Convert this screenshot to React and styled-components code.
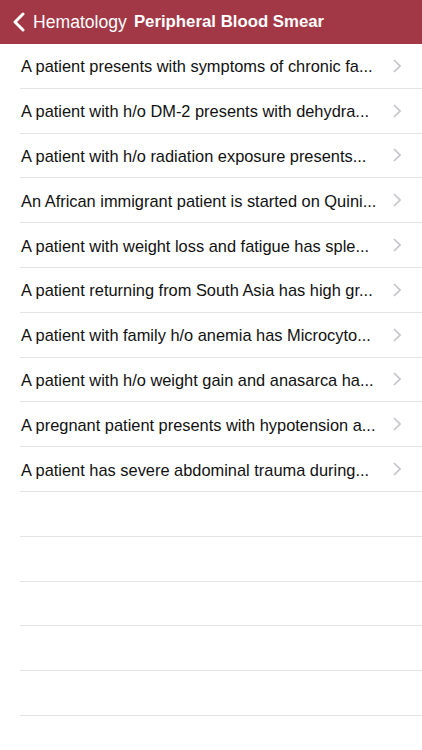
import React from "react";
import styled, { createGlobalStyle } from "styled-components";

const GlobalStyle = createGlobalStyle`
    body {
        margin: 0;
        background: #ffffff;
        font-family: "Liberation Sans", Arial, sans-serif;
        -webkit-font-smoothing: antialiased;
    }
`;

const Screen = styled.div`
    width: 422px;
    height: 750px;
    overflow: hidden;
    background: #ffffff;
`;

const NavBar = styled.header`
    height: 44px;
    background: #a23745;
    display: flex;
    align-items: center;
    padding-left: 13px;
    color: #ffffff;
`;

const BackButton = styled.div`
    display: flex;
    align-items: center;
    gap: 8px;
    font-size: 17.6px;
`;

const Title = styled.h1`
    margin: 0 0 0 7px;
    font-size: 16.8px;
    font-weight: bold;
`;

const List = styled.ul`
    list-style: none;
    margin: 0;
    padding: 0 0 0 20px;
`;

const Row = styled.li`
    height: 44.8px;
    box-sizing: border-box;
    border-bottom: 1px solid #e4e4e7;
    display: flex;
    align-items: center;
    padding-right: 21px;
`;

const RowText = styled.span`
    flex: 1;
    padding-left: 1px;
    padding-top: 2px;
    font-size: 16.4px;
    color: #111111;
    white-space: nowrap;
    overflow: hidden;
`;

const Chevron = () => (
    <svg width="8" height="14" viewBox="0 0 8 14">
        <path d="M1 1 L7 7 L1 13" fill="none" stroke="#c4c4c9" strokeWidth="1.6" />
    </svg>
);

const BackChevron = () => (
    <svg width="12" height="20" viewBox="0 0 12 20">
        <path d="M10 2 L2 10 L10 18" fill="none" stroke="#ffffff" strokeWidth="3" strokeLinecap="round" strokeLinejoin="round" />
    </svg>
);

const cases = [
    "A patient presents with symptoms of chronic fa...",
    "A patient with h/o DM-2 presents with dehydra...",
    "A patient with h/o radiation exposure presents...",
    "An African immigrant patient is started on Quini...",
    "A patient with weight loss and fatigue has sple...",
    "A patient returning from South Asia has high gr...",
    "A patient with family h/o anemia has Microcyto...",
    "A patient with h/o weight gain and anasarca ha...",
    "A pregnant patient presents with hypotension a...",
    "A patient has severe abdominal trauma during...",
];

const App = () => {
    return (
        <Screen>
            <GlobalStyle />
            <NavBar>
                <BackButton>
                    <BackChevron />
                    Hematology
                </BackButton>
                <Title>Peripheral Blood Smear</Title>
            </NavBar>
            <List>
                {cases.map((text) => (
                    <Row key={text}>
                        <RowText>{text}</RowText>
                        <Chevron />
                    </Row>
                ))}
                {/* empty rows below the list */}
                {[0, 1, 2, 3, 4].map((i) => (
                    <Row key={"empty" + i} />
                ))}
            </List>
        </Screen>
    );
};

export default App;
